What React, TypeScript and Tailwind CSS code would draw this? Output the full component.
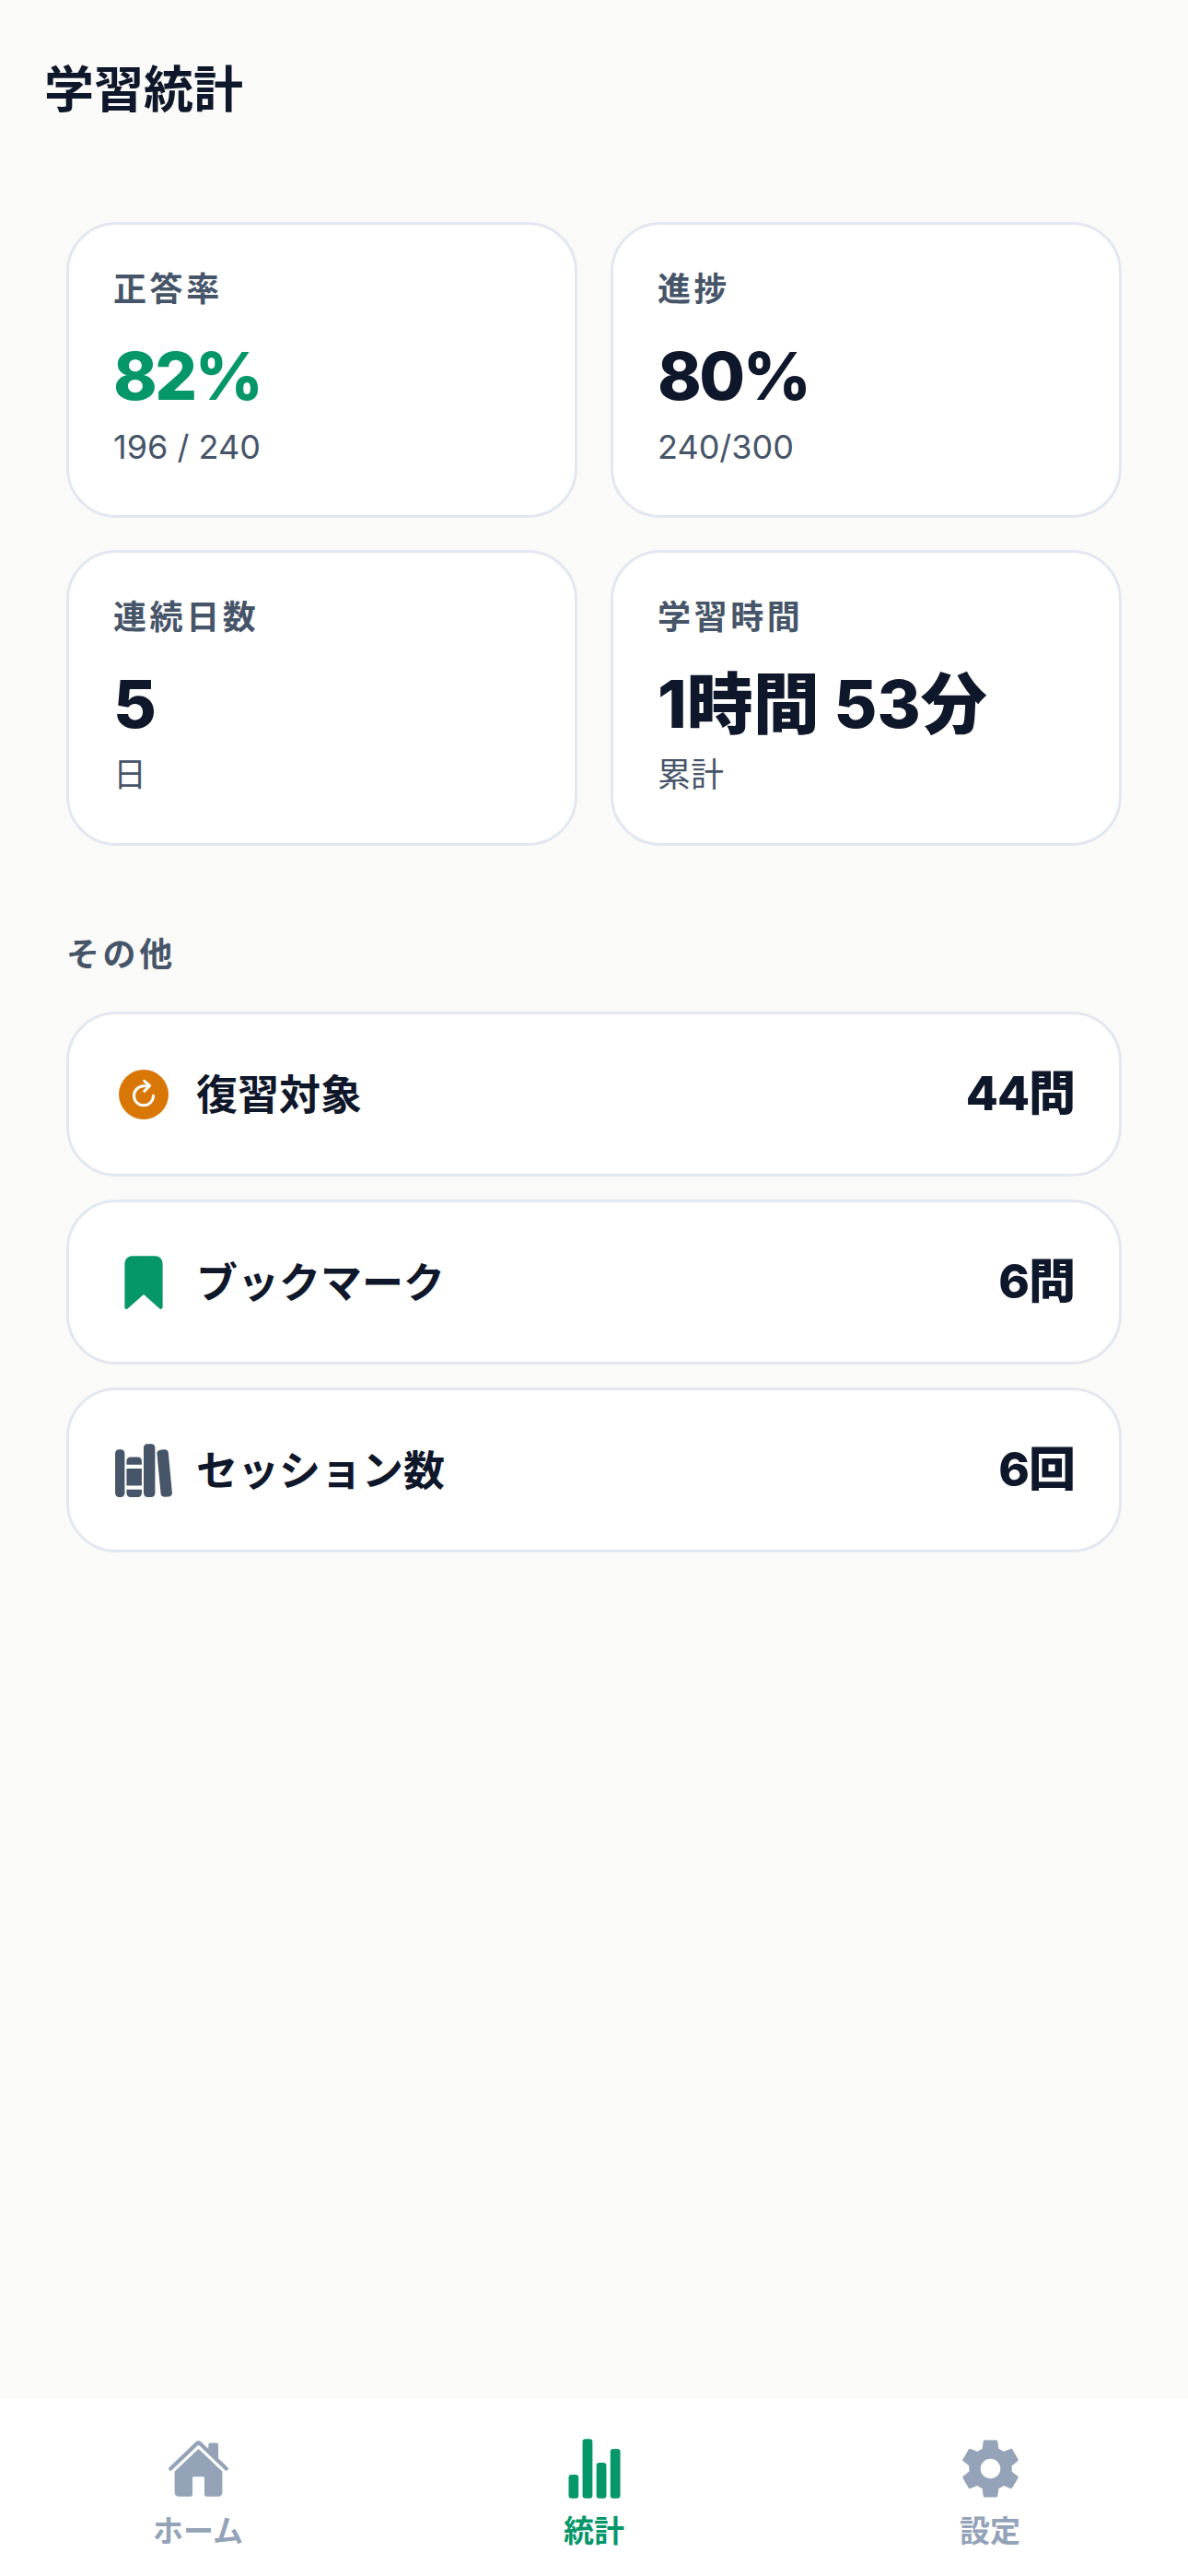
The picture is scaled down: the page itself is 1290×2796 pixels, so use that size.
import React from 'react';
import { IoBookmark, IoHome, IoLibrary, IoSettingsSharp, IoStatsChart } from 'react-icons/io5';

const stats = [
  { label: '正答率', value: '82%', sub: '196 / 240', color: 'text-[#059669] tracking-[-2.5px]' },
  { label: '進捗', value: '80%', sub: '240/300', color: 'text-[#0f172a] tracking-[-2.5px]' },
  { label: '連続日数', value: '5', sub: '日', color: 'text-[#0f172a] tracking-[-2.5px]' },
  { label: '学習時間', value: '1時間 53分', sub: '累計', color: 'text-[#0f172a]' },
];

function ReviewIcon() {
  return (
    <svg width="66" height="66" viewBox="0 0 66 66" fill="none">
      <circle cx="33" cy="33" r="27" fill="#d97706" />
      <path d="M38 23.8H33A10.5 10.5 0 1 0 43.5 34.3" stroke="#fff" strokeWidth="3" strokeLinecap="round" />
      <path d="M33.7 18.3L39.7 23.5L33.7 29.3" stroke="#fff" strokeWidth="3" strokeLinecap="round" strokeLinejoin="round" />
    </svg>
  );
}

const rows = [
  { label: '復習対象', value: '44問', icon: <ReviewIcon /> },
  { label: 'ブックマーク', value: '6問', icon: <IoBookmark size={66} className="text-[#059669]" /> },
  { label: 'セッション数', value: '6回', icon: <IoLibrary size={66} className="text-[#475569]" /> },
];

const tabs = [
  { label: 'ホーム', icon: IoHome, active: false },
  { label: '統計', icon: IoStatsChart, active: true },
  { label: '設定', icon: IoSettingsSharp, active: false },
];

export default function App() {
  return (
    <div className="w-[1290px] h-[2796px] flex flex-col bg-[#fafaf9] font-['Inter','Noto_Sans_CJK_JP',sans-serif] text-[#0f172a]">
      {/* Header */}
      <header className="h-[196px] px-[48px] flex items-center shrink-0">
        <h1 className="text-[54px] leading-none font-bold">学習統計</h1>
      </header>

      <main className="flex-1 px-[72px] pt-[45px]">
        {/* Stat cards */}
        <div className="grid grid-cols-2 gap-x-[36px] gap-y-[35px]">
          {stats.map((s) => (
            <div key={s.label} className="h-[321px] bg-white border-[3px] border-[#e2e8f0] rounded-[54px] px-[48px] pt-[43px]">
              <div className="text-[36px] leading-[54px] font-bold tracking-[3.6px] text-[#475569]">{s.label}</div>
              <div className={`mt-[22px] text-[72px] leading-[90px] font-extrabold ${s.color}`}>{s.value}</div>
              <div className="mt-[8px] text-[36px] leading-[48px] text-[#475569]">{s.sub}</div>
            </div>
          ))}
        </div>

        {/* Other */}
        <h2 className="mt-[94px] mb-[38px] text-[36px] leading-[48px] font-bold tracking-[3.6px] text-[#475569]">その他</h2>
        <div className="flex flex-col gap-[25px]">
          {rows.map((r) => (
            <div key={r.label} className="h-[179px] bg-white border-[3px] border-[#e2e8f0] rounded-[54px] px-[48px] flex items-center justify-between">
              <div className="flex items-center gap-[24px]">
                {r.icon}
                <span className="pt-[3px] text-[45px] font-bold">{r.label}</span>
              </div>
              <span className="text-[51px] font-extrabold tracking-[-1px]">{r.value}</span>
            </div>
          ))}
        </div>
      </main>

      {/* Bottom tabs */}
      <nav className="h-[193px] bg-white grid grid-cols-3 shrink-0">
        {tabs.map((t) => {
          const Icon = t.icon;
          return (
            <div key={t.label} className={`flex flex-col items-center pt-[42px] ${t.active ? 'text-[#059669]' : 'text-[#94a3b8]'}`}>
              <Icon size={69} />
              <span className="mt-[13px] text-[33px] leading-[40px] font-bold">{t.label}</span>
            </div>
          );
        })}
      </nav>
    </div>
  );
}
